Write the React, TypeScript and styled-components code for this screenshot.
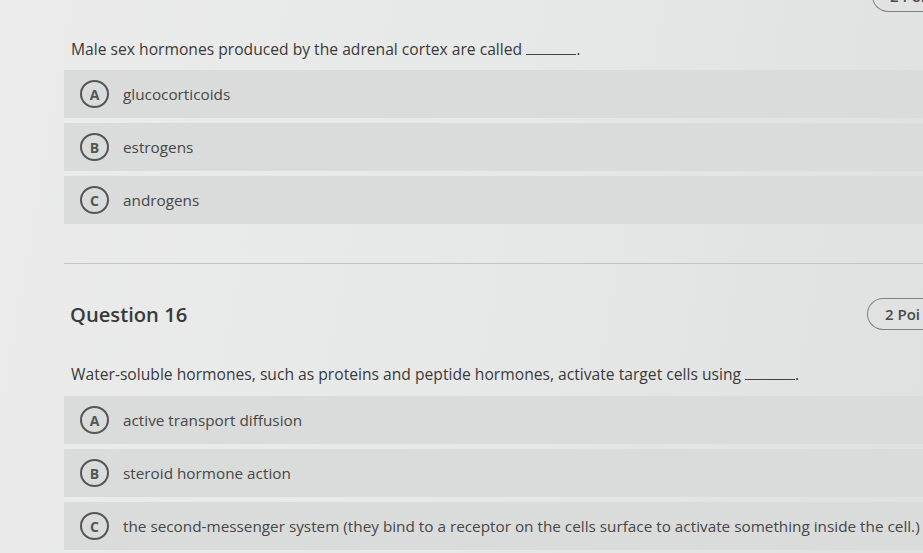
import React from "react";
import styled, { createGlobalStyle } from "styled-components";

const Global = createGlobalStyle`
  html, body { margin: 0; padding: 0; }
  body {
    width: 923px;
    height: 553px;
    overflow: hidden;
    background: linear-gradient(100deg, #ebebeb 0%, #e7e8e8 50%, #dfe0e0 100%);
    font-family: "Open Sans", "Liberation Sans", sans-serif;
    color: #3b3b3b;
  }
`;

const Page = styled.div`
  padding-left: 64px;
  display: flex;
  flex-direction: column;
`;

const TopBar = styled.div`
  display: flex;
  justify-content: flex-end;
  margin-top: -20px;
  height: 32px;
`;

const Pill = styled.div<{ w: number }>`
  box-sizing: border-box;
  height: 32px;
  border: 1.5px solid #808283;
  border-right: none;
  border-radius: 16px 0 0 16px;
  padding: 0 0 0 17px;
  display: flex;
  align-items: center;
  font-size: 15px;
  font-weight: 600;
  color: #4a4a4a;
  white-space: nowrap;
  overflow: hidden;
  width: ${(p) => p.w}px;
`;

const Prompt = styled.div<{ mt: number }>`
  margin-left: 7px;
  font-size: 15.65px;
  line-height: 20px;
  color: #3a3a3a;
  white-space: nowrap;
  margin-top: ${(p) => p.mt}px;
`;

const Blank = styled.span`
  display: inline-block;
  width: 50px;
  border-bottom: 1px solid #444;
  margin-left: 4px;
  height: 16px;
`;

const Options = styled.div<{ mt: number }>`
  display: flex;
  flex-direction: column;
  gap: 5px;
  margin-top: ${(p) => p.mt}px;
`;

const Row = styled.div`
  height: 48px;
  background: #dadbdb;
  display: flex;
  align-items: center;
  padding-left: 16px;
  gap: 14px;
`;

const Badge = styled.span`
  box-sizing: border-box;
  width: 29px;
  height: 28px;
  border-radius: 50%;
  border: 2px solid #555;
  display: flex;
  align-items: center;
  justify-content: center;
  font-size: 14px;
  font-weight: 700;
  color: #555;
  flex: none;
`;

const OptionText = styled.span`
  font-size: 15.3px;
  color: #474747;
  white-space: nowrap;
`;

const Divider = styled.hr`
  border: none;
  border-top: 1px solid #c3c4c4;
  margin: 39px 0 0 0;
`;

const Header = styled.div`
  display: flex;
  align-items: center;
  justify-content: space-between;
  margin-top: 34px;
  height: 32px;
`;

const Title = styled.h2`
  margin: 0 0 0 6px;
  font-size: 20.2px;
  font-weight: 600;
  color: #3a3a3a;
`;

type Q = { prompt: string; options: string[] };

const q1: Q = {
  prompt: "Male sex hormones produced by the adrenal cortex are called",
  options: ["glucocorticoids", "estrogens", "androgens"],
};
const q2: Q = {
  prompt:
    "Water-soluble hormones, such as proteins and peptide hormones, activate target cells using",
  options: [
    "active transport diffusion",
    "steroid hormone action",
    "the second-messenger system (they bind to a receptor on the cells surface to activate something inside the cell.)",
  ],
};

const letters = ["A", "B", "C"];

const OptionList = ({ items, mt }: { items: string[]; mt: number }) => (
  <Options mt={mt}>
    {items.map((o, i) => (
      <Row key={o}>
        <Badge>{letters[i]}</Badge>
        <OptionText>{o}</OptionText>
      </Row>
    ))}
  </Options>
);

export default function App() {
  return (
    <>
      <Global />
      <Page>
        <TopBar>
          <Pill w={51}>2 Poi</Pill>
        </TopBar>
        <Prompt mt={26}>
          {q1.prompt}
          <Blank />.
        </Prompt>
        <OptionList items={q1.options} mt={11} />
        <Divider />
        <Header>
          <Title>Question 16</Title>
          <Pill w={56}>2 Poi</Pill>
        </Header>
        <Prompt mt={33}>
          {q2.prompt}
          <Blank />.
        </Prompt>
        <OptionList items={q2.options} mt={12} />
      </Page>
    </>
  );
}
